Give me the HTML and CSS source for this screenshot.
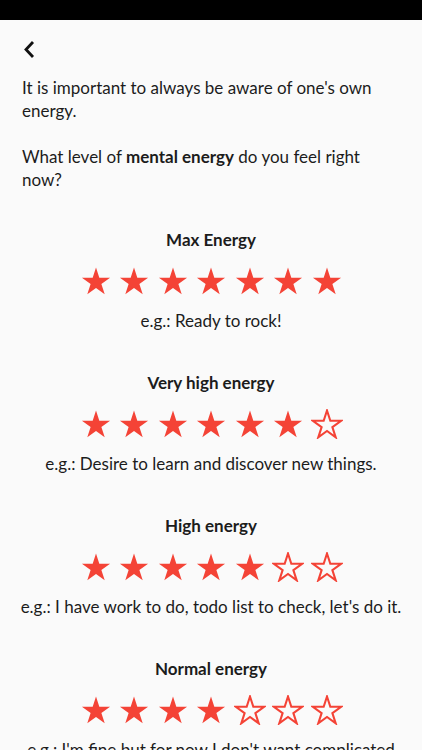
FILE: index.html
```html
<!DOCTYPE html>
<html lang="en">
<head>
    <meta charset="UTF-8">
    <meta name="viewport" content="width=device-width, initial-scale=1.0">
    <title>Mental Energy</title>
    <link rel="stylesheet" href="styles.css">
</head>
<body>

    <!-- Star shapes used by every rating row -->
    <svg class="defs" width="0" height="0">
        <defs>
            <polygon id="star" points="50,0 61.23,34.55 97.55,34.55 68.16,55.9 79.39,90.45 50,69.1 20.61,90.45 31.84,55.9 2.45,34.55 38.77,34.55"/>
        </defs>
    </svg>

    <div class="status-bar"></div>

    <div class="page">
        <button class="back-button" aria-label="Back">
            <svg width="12" height="19" viewBox="0 0 12 19">
                <path d="M10 2 L3 9.5 L10 17" fill="none" stroke="#111" stroke-width="2.8"/>
            </svg>
        </button>

        <p class="intro">It is important to always be aware of one's own energy.</p>
        <p class="intro">What level of <b>mental energy</b> do you feel right now?</p>

        <div class="levels" id="levels"></div>
    </div>

    <script>
        const levels = [
            { title: 'Max Energy', stars: 7, example: 'Ready to rock!' },
            { title: 'Very high energy', stars: 6, example: 'Desire to learn and discover new things.' },
            { title: 'High energy', stars: 5, example: "I have work to do, todo list to check, let's do it." },
            { title: 'Normal energy', stars: 4, example: "I'm fine but for now I don't want complicated things." }
        ];

        const list = document.getElementById('levels');
        levels.forEach(function (level) {
            let stars = '';
            for (let i = 0; i < 7; i++) {
                const cls = i < level.stars ? 'star full' : 'star empty';
                stars += '<svg class="' + cls + '" viewBox="-4 -4 108 99"><use href="#star"/></svg>';
            }
            const item = document.createElement('div');
            item.className = 'level';
            item.innerHTML =
                '<h2>' + level.title + '</h2>' +
                '<div class="stars">' + stars + '</div>' +
                '<p class="example">e.g.: ' + level.example + '</p>';
            list.appendChild(item);
        });
    </script>

</body>
</html>
```

FILE: styles.css
```css
body {
    font-family: Lato, "Open Sans", sans-serif;
    margin: 0;
    background-color: #fafafa;
    color: #1c1c1c;
    font-size: 17px;
    line-height: 23px;
}

.defs {
    position: absolute;
}

.status-bar {
    height: 20px;
    background-color: #000;
}

.page {
    padding: 0 22px;
    height: 730px;
    overflow: hidden;
}

.back-button {
    display: block;
    background: none;
    border: none;
    padding: 0;
    margin: 20px 0 17px 1px;
    height: 19px;
    cursor: pointer;
}

.intro {
    margin: 0 0 23px 0;
}

.levels {
    margin: 38px -10px 0;
}

.level {
    text-align: center;
    margin-bottom: 40px;
}

.level h2 {
    font-size: 17px;
    line-height: 22px;
    font-weight: bold;
    margin: 0 0 12px 0;
}

.stars {
    display: flex;
    justify-content: center;
    gap: 6.5px;
    height: 36px;
    align-items: center;
}

.star {
    width: 32px;
    height: 30px;
}

.star.full use {
    fill: #f44336;
}

.star.empty use {
    fill: none;
    stroke: #f44336;
    stroke-width: 7;
}

.example {
    margin: 11px 0 0 0;
    line-height: 22px;
}
```
